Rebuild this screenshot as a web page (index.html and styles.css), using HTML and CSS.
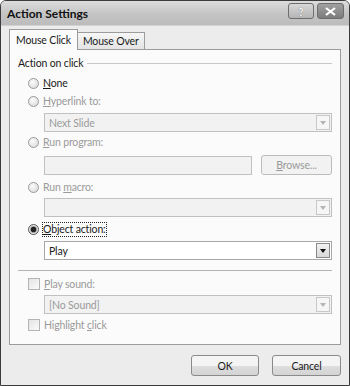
FILE: index.html
```html
<!DOCTYPE html>
<html lang="en">
<head>
    <meta charset="UTF-8">
    <title>Action Settings</title>
    <link rel="stylesheet" href="styles.css">
</head>
<body>
    <div class="window">
        <div class="titlebar">
            <span class="title">Action Settings</span>
            <div class="caption-buttons">
                <span class="cap-btn help">?</span>
                <span class="cap-btn close">
                    <svg width="13" height="9" viewBox="0 0 13 9"><path d="M2 1 L11 8 M11 1 L2 8" stroke="#fff" stroke-width="2.2" fill="none"/></svg>
                </span>
            </div>
        </div>

        <div class="tabs">
            <span class="tab active">Mouse Click</span>
            <span class="tab">Mouse Over</span>
        </div>

        <div class="panel">
            <div class="legend"><span>Action on click</span><span class="legend-line"></span></div>

            <div class="row mt4"><span class="radio"></span><span class="label"><u>N</u>one</span></div>

            <div class="row mt2 disabled"><span class="radio"></span><span class="label"><u>H</u>yperlink to:</span></div>
            <div class="field mt4 disabled"><span class="value">Next Slide</span><span class="arrow"></span></div>

            <div class="row mt2 disabled"><span class="radio"></span><span class="label"><u>R</u>un program:</span></div>
            <div class="field-line mt5">
                <div class="field input disabled"></div>
                <span class="btn browse"><u>B</u>rowse...</span>
            </div>

            <div class="row mt4 disabled"><span class="radio"></span><span class="label">Run <u>m</u>acro:</span></div>
            <div class="field mt3 disabled"><span class="value"></span><span class="arrow"></span></div>

            <div class="row mt4"><span class="radio checked"></span><span class="label focus"><u>O</u>bject action:</span></div>
            <div class="field mt4"><span class="value">Play</span><span class="arrow"></span></div>

            <div class="separator"></div>

            <div class="row mt5 disabled"><span class="checkbox"></span><span class="label"><u>P</u>lay sound:</span></div>
            <div class="field mt3 disabled"><span class="value">[No Sound]</span><span class="arrow"></span></div>

            <div class="row mt3 disabled"><span class="checkbox"></span><span class="label">Highlight <u>c</u>lick</span></div>
        </div>

        <div class="footer">
            <span class="btn ok">OK</span>
            <span class="btn cancel">Cancel</span>
        </div>
    </div>
</body>
</html>
```

FILE: styles.css
```css
body {
    margin: 0;
    background: #fff;
    font-family: Lato, "Open Sans", sans-serif;
    font-size: 10.5px;
    letter-spacing: -0.15px;
    color: #1a1a1a;
}
.window {
    width: 348px;
    height: 384px;
    border: 1px solid #3c3c3c;
    border-radius: 6px 6px 0 0;
    background: #ececec;
    overflow: hidden;
}
.titlebar {
    height: 24px;
    display: flex;
    align-items: center;
    justify-content: space-between;
    padding: 0 5px 0 6px;
    background: linear-gradient(#dcdcdc, #c4c4c4 55%, #bcbcbc);
    border-bottom: 1px solid #d2d2d2;
}
.title {
    font-weight: bold;
    font-size: 12px;
    letter-spacing: 0;
    color: #111;
}
.caption-buttons {
    display: flex;
    gap: 3px;
    margin-top: -4px;
}
.cap-btn {
    width: 24px;
    height: 14px;
    border: 1px solid #6e6e6e;
    border-radius: 3px;
    display: flex;
    align-items: center;
    justify-content: center;
    font-weight: bold;
    font-size: 11px;
    line-height: 1;
}
.help {
    background: linear-gradient(#d8d8d8, #b4b4b4);
    color: #fafafa;
    text-shadow: 0 0 1px #555;
}
.close {
    width: 25px;
    background: linear-gradient(#a0a0a0, #7c7c7c);
}
.tabs {
    display: flex;
    align-items: flex-end;
    padding: 2px 0 0 8px;
    height: 21px;
}
.tab {
    height: 16px;
    padding: 0 5px;
    border: 1px solid #9c9c9c;
    border-bottom: none;
    background: linear-gradient(#f6f6f6, #e4e4e4);
    line-height: 16px;
}
.tab.active {
    height: 20px;
    line-height: 20px;
    padding: 0 6px;
    background: #fbfbfb;
    margin-bottom: -1px;
    position: relative;
    z-index: 1;
}
.tab + .tab {
    border-left: none;
}
.panel {
    margin: 0 8px;
    height: 294px;
    border: 1px solid #9c9c9c;
    background: #fbfbfb;
    padding: 0 8px;
}
.legend {
    display: flex;
    align-items: center;
    gap: 4px;
    height: 16px;
    margin-top: 5px;
}
.legend-line {
    flex: 1;
    height: 1px;
    background: #c8c8c8;
}
.row {
    display: flex;
    align-items: center;
    height: 16px;
    padding-left: 10px;
}
.mt2 { margin-top: 2px; }
.mt3 { margin-top: 3px; }
.mt4 { margin-top: 4px; }
.mt5 { margin-top: 5px; }
.radio {
    width: 11px;
    height: 11px;
    border-radius: 50%;
    border: 1px solid #9a9a9a;
    background: radial-gradient(circle at 40% 35%, #fdfdfd, #d4d4d4);
    margin-right: 4px;
    box-sizing: border-box;
}
.radio.checked {
    border-color: #555;
    background: radial-gradient(circle, #222 0 2.5px, #9a9a9a 3px, #e6e6e6 4px);
}
.checkbox {
    width: 12px;
    height: 12px;
    border: 1px solid #b4b4b4;
    background: linear-gradient(135deg, #e4e4e4, #fafafa);
    margin-right: 4px;
    box-sizing: border-box;
}
.disabled .label,
.field.disabled .value {
    color: #9a9a9a;
}
.label.focus {
    outline: 1px dotted #222;
    line-height: 13px;
}
.field {
    height: 19px;
    margin-left: 26px;
    box-sizing: border-box;
    border: 1px solid #a8a8a8;
    background: #fff;
    display: flex;
    align-items: center;
    justify-content: space-between;
}
.field.disabled {
    background: #f2f2f2;
    border-color: #c0c0c0;
}
.value {
    padding-left: 4px;
}
.arrow {
    width: 14px;
    height: 15px;
    margin-right: 1px;
    border: 1px solid #c8c8c8;
    box-sizing: border-box;
    background: #f6f6f6;
    position: relative;
}
.arrow::after {
    content: "";
    position: absolute;
    left: 3px;
    top: 5px;
    border-left: 3.5px solid transparent;
    border-right: 3.5px solid transparent;
    border-top: 4px solid #111;
}
.field.disabled .arrow::after {
    border-top-color: #b4b4b4;
}
.field:not(.disabled) .arrow {
    border-color: #8a8a8a;
    background: linear-gradient(#f2f2f2, #d8d8d8);
}
.field-line {
    display: flex;
    align-items: center;
    gap: 9px;
}
.field-line .field {
    flex: 1;
}
.btn {
    display: flex;
    align-items: center;
    justify-content: center;
    box-sizing: border-box;
    border: 1px solid #8a8a8a;
    border-radius: 3px;
    background: linear-gradient(#f4f4f4 50%, #dedede 50%, #d4d4d4);
}
.browse {
    width: 71px;
    height: 20px;
    color: #9a9a9a;
    border-color: #bcbcbc;
    background: #f2f2f2;
}
.separator {
    height: 1px;
    background: #b4b4b4;
    margin-top: 10px;
}
.footer {
    display: flex;
    justify-content: flex-end;
    gap: 13px;
    padding: 10px 8px 0 0;
}
.footer .btn {
    height: 21px;
    width: 68px;
}
.footer .cancel {
    width: 69px;
}
```
